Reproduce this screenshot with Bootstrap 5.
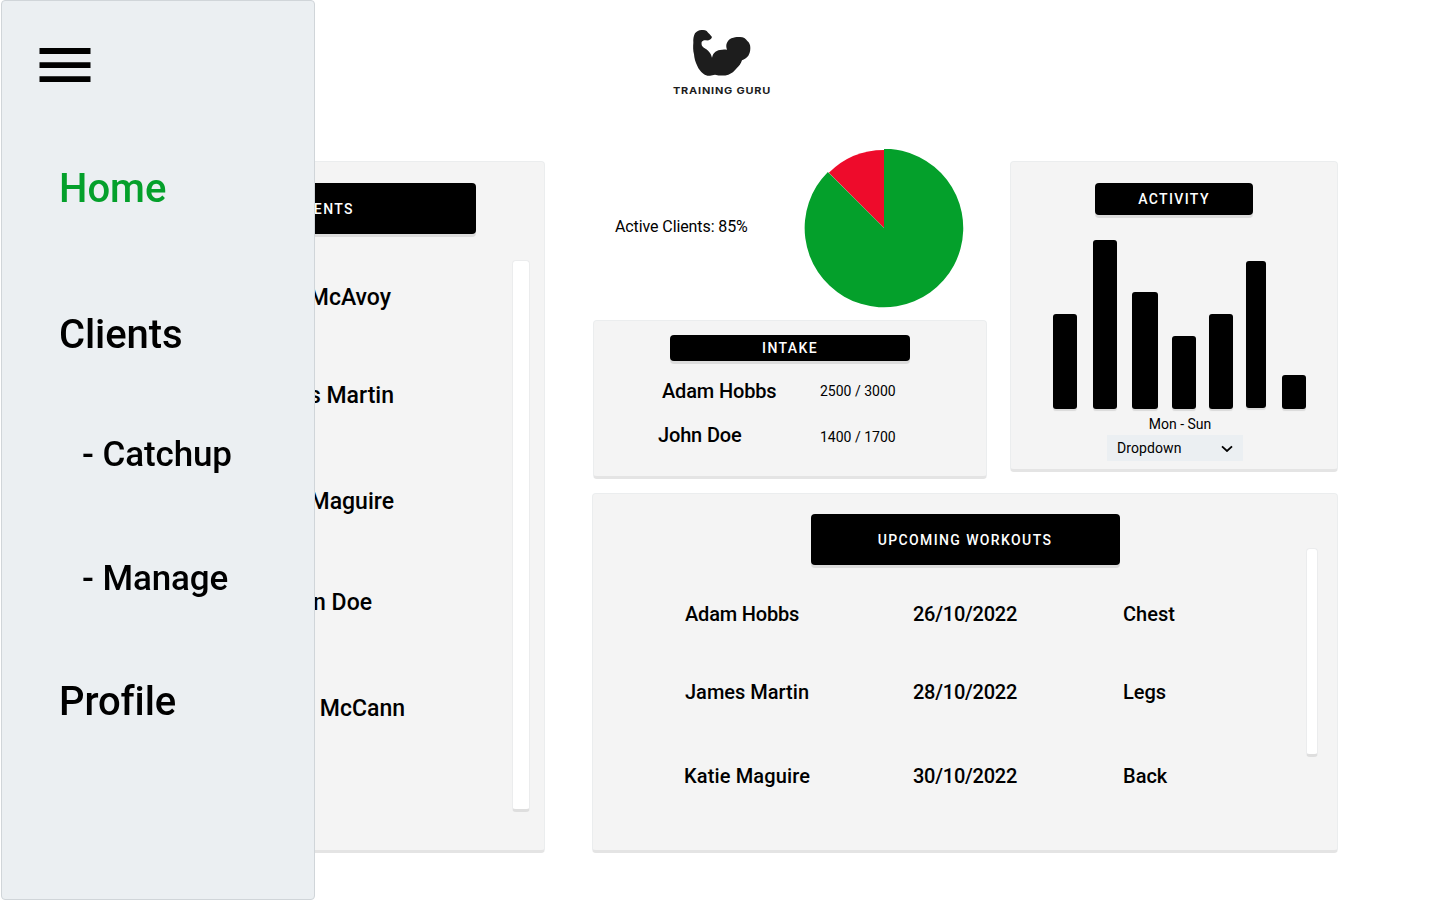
<!DOCTYPE html>
<html lang="en">
<head>
<meta charset="utf-8">
<meta name="viewport" content="width=device-width, initial-scale=1">
<title>Training Guru</title>
<link href="https://cdn.jsdelivr.net/npm/bootstrap@5.3.0/dist/css/bootstrap.min.css" rel="stylesheet">
<style>
body{font-family:Roboto,"Liberation Sans",sans-serif;font-size:14px;font-variant-ligatures:none;color:#000;background:#fff;height:900px;overflow:hidden}
.drawer{left:1px;top:0;width:314px;height:900px;background:#ebeff2;border:1px solid #d0d5d9;border-radius:4px;padding:47px 0 0 37px;z-index:10}
.drawer svg{display:block}
.drawer .nav-link{color:#000;font-weight:500;font-size:40px;line-height:48px;letter-spacing:-.1px;padding:0 0 0 20px;white-space:nowrap}
.drawer .nav-link.active{color:#04a02b;letter-spacing:0}
.drawer .nav-link.sub{font-size:35px;letter-spacing:-.1px;padding-left:43px}
.drawer nav{display:grid;grid-template-rows:146px 120px 124px 123px 48px;margin-top:81px}
.brand{height:149px;padding-top:20px}
.board{display:grid;grid-template-columns:447px 746px;column-gap:47px;padding-left:98px}
.panel{background:#f4f4f4;border:1px solid #ebedee;border-bottom:3px solid #e4e4e4;border-radius:4px}
.title-btn{background:#000;color:#fff;border-radius:4px;box-shadow:0 3px 0 #dcdcdc;font-size:14px;font-weight:500;letter-spacing:1.38px;line-height:20px;text-transform:uppercase;display:flex;align-items:center;justify-content:center}
.title-btn.big{width:309px;height:51px}
.track{background:#fff;border:1px solid #ebeced;border-bottom:3px solid #dedede;border-radius:4px}
.clients{height:692px;margin-top:12px;padding-top:21px}
.clients .body-row{display:grid;grid-template-columns:413px 18px;margin-top:26px}
.clients ul{display:grid;grid-template-rows:98px 106px 101px 106px 28px;font-size:23px;line-height:28px;font-weight:500;padding-top:24px;text-align:right}
.clients .track{height:552px}
.upper{display:grid;grid-template-columns:394px 328px;column-gap:23px;padding-left:1px}
.status{height:171px;padding-left:22px}
.status span{font-size:16px;line-height:20px;letter-spacing:-.1px;width:189px;padding-top:68px}
.intake{height:159px;padding-top:14px}
.intake .title-btn{width:240px;height:26px}
.intake dl{display:grid;grid-template-columns:158px auto;grid-template-rows:44px 24px;margin:18px 0 0 68px}
.intake dt{font-size:20px;line-height:24px;font-weight:500;letter-spacing:-.15px}
.intake dt.outdent{margin-left:-4px}
.intake dd{line-height:24px;margin:0}
.intake dd.lower{margin-top:2px}
.activity{height:311px;margin-top:12px;padding-top:21px}
.activity .title-btn{width:158px;height:32px}
.chart{height:169px;margin-top:25px;padding-left:42px}
.chart i{display:block;width:24px;background:#000;border-radius:3px;box-shadow:0 2px 1px #dadada}
.select-box{width:136px;height:26px;background:#ebeff2;border:0;border-radius:0;font-size:14px;line-height:26px;letter-spacing:.1px;padding:0 10px;margin-left:96px}
.period{line-height:18px;margin:6px 0 2px 12px}
.workouts{height:360px;margin-top:14px;padding-top:20px}
.workouts .track{width:12px;height:209px;position:absolute;right:19px;top:54px}
.schedule{display:grid;grid-template-columns:228px 210px auto;grid-template-rows:78px 84px 24px;font-size:20px;line-height:24px;font-weight:500;margin:37px 0 0 92px}
.schedule .tight{letter-spacing:-.18px}
.schedule .date{letter-spacing:-.25px}
.schedule .loose{letter-spacing:.14px;margin-left:-1px}
</style>
</head>
<body>
<aside class="drawer position-fixed">
  <svg width="53" height="36" aria-label="Menu"><path d="M.5 0h51v6H.5zM.5 14.2h51v5.8H.5zM.5 28.2h51V34H.5z"/></svg>
  <nav>
    <a class="nav-link active" href="#">Home</a>
    <a class="nav-link" href="#">Clients</a>
    <a class="nav-link sub" href="#">- Catchup</a>
    <a class="nav-link sub" href="#">- Manage</a>
    <a class="nav-link" href="#">Profile</a>
  </nav>
</aside>

<header class="brand d-flex justify-content-center">
  <svg width="120" height="90" viewBox="0 0 360 270">
    <path fill="#1d1d1d" d="M125 30C131 29 136 30 140 33C146 40 151 45 156 51C154 58 147 62 138 61C132 60 128 62 125 66C124 71 125 76 127 79C131 84 139 87 145 93C152 100 154 106 156 113C158 107 159 103 162 100C168 93 173 91 180 90C187 88 194 88 201 89C198 81 198 74 201 68C205 59 212 54 220 53C227 51 234 51 240 51C250 51 258 56 262 63C268 68 271 75 271 84C271 93 269 101 265 107C260 114 253 118 246 121C243 131 237 138 230 145C223 154 215 161 205 164C193 168 178 167 165 164C160 164 155 167 150 167C143 168 137 166 130 161C121 154 116 147 112 138C106 127 103 115 102 103C99 91 99 79 100 68C99 57 101 48 105 40C110 34 116 30 125 30Z"/>
    <text x="39" y="222" font-family="Inter" font-weight="700" font-size="28" textLength="294" lengthAdjust="spacingAndGlyphs" letter-spacing="2" fill="#1d1d1d">TRAINING GURU</text>
  </svg>
</header>

<main class="board">
  <section class="panel clients">
    <div class="title-btn big mx-auto">Clients</div>
    <div class="body-row">
      <ul class="list-unstyled mb-0">
        <li style="padding-right:121px">James McAvoy</li>
        <li style="padding-right:118px">James Martin</li>
        <li style="padding-right:118px">Katie Maguire</li>
        <li style="padding-right:140px">John Doe</li>
        <li style="padding-right:107px">Ryan McCann</li>
      </ul>
      <div class="track"></div>
    </div>
  </section>

  <div>
    <div class="upper">
      <div>
        <div class="status d-flex align-items-start">
          <span>Active Clients: 85%</span>
          <svg width="162" height="160" viewBox="0 0 162 160"><path fill="#ee0b2b" d="M80 79V1A78 78 0 0 0 24.8 23.8Z"/><path fill="#04a02b" d="M80 79V-.3A79.3 79.3 0 1 1 23.9 22.9Z"/></svg>
        </div>
        <section class="panel intake">
          <div class="title-btn mx-auto">Intake</div>
          <dl>
            <dt>Adam Hobbs</dt><dd>2500 / 3000</dd>
            <dt class="outdent">John Doe</dt><dd class="lower">1400 / 1700</dd>
          </dl>
        </section>
      </div>
      <section class="panel activity">
        <div class="title-btn mx-auto">Activity</div>
        <div class="chart d-flex align-items-end">
          <i style="height:95px"></i>
          <i style="height:169px;margin-left:16px"></i>
          <i style="height:117px;width:26px;margin-left:15px"></i>
          <i style="height:73px;margin-left:14px"></i>
          <i style="height:95px;margin-left:13px"></i>
          <i style="height:147px;width:20px;margin:0 0 1px 13px"></i>
          <i style="height:34px;margin-left:16px"></i>
        </div>
        <div class="period text-center">Mon - Sun</div>
        <button class="select-box d-flex align-items-center justify-content-between">Dropdown
          <svg width="12" height="8" fill="none" stroke="#000" stroke-width="1.8"><path d="M1 2.3L6 7L11 2.3"/></svg>
        </button>
      </section>
    </div>
    <section class="panel workouts position-relative">
      <div class="title-btn big mx-auto">Upcoming Workouts</div>
      <div class="schedule">
        <div class="tight">Adam Hobbs</div><div class="date">26/10/2022</div><div>Chest</div>
        <div>James Martin</div><div class="date">28/10/2022</div><div>Legs</div>
        <div class="loose">Katie Maguire</div><div class="date">30/10/2022</div><div>Back</div>
      </div>
      <div class="track"></div>
    </section>
  </div>
</main>
<script src="https://cdn.jsdelivr.net/npm/bootstrap@5.3.0/dist/js/bootstrap.bundle.min.js"></script>
</body>
</html>
